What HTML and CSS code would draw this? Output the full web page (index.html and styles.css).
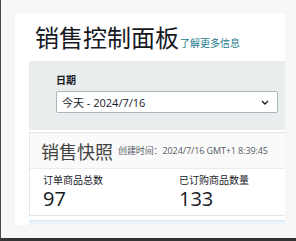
FILE: index.html
```html
<!DOCTYPE html>
<html lang="zh">
<head>
<meta charset="utf-8">
<link rel="stylesheet" href="styles.css">
</head>
<body>
<div class="frame">
  <div class="panel">
    <div class="page-head">
      <h1 class="title">销售控制面板</h1>
      <a class="info-link">了解更多信息</a>
    </div>
    <div class="filters">
      <div class="field-label">日期</div>
      <div class="select">
        <span class="select-text">今天 - 2024/7/16</span>
        <svg class="chev" width="8" height="5" viewBox="0 0 8 5"><path d="M1 1 L4 4 L7 1" fill="none" stroke="#16191f" stroke-width="1.3"/></svg>
      </div>
    </div>
    <div class="card">
      <div class="card-head">
        <span class="card-title">销售快照</span>
        <span class="card-meta">创建时间：2024/7/16 GMT+1 8:39:45</span>
      </div>
      <div class="card-body">
        <div class="metric">
          <div class="metric-label">订单商品总数</div>
          <div class="metric-value">97</div>
        </div>
        <div class="metric">
          <div class="metric-label">已订购商品数量</div>
          <div class="metric-value">133</div>
        </div>
      </div>
    </div>
    <div class="next-strip"></div>
  </div>
</div>
</body>
</html>
```
FILE: styles.css
```css
* { box-sizing: border-box; }
html, body { margin: 0; padding: 0; }
body {
  font-family: "Open Sans", "Noto Sans CJK SC", sans-serif;
  color: #16191f;
}
.frame {
  width: 296px;
  height: 241px;
  background: #f7f7f7;
  border-left: 1px solid #4a4a4a;
  border-bottom: 3px solid #333;
  padding: 14px 0 0 14px;
  overflow: hidden;
}
.panel {
  width: 270px;
  height: 211px;
  background: #fff;
  overflow: hidden;
  padding-left: 14px;
}
.page-head {
  display: flex;
  align-items: baseline;
  height: 47px;
  padding: 7px 0 0 6px;
}
.title {
  margin: 0;
  font-family: "Noto Sans CJK SC", sans-serif;
  font-weight: 400;
  font-size: 24px;
  line-height: 32px;
  color: #16191f;
}
.info-link {
  font-family: "Noto Sans CJK SC", sans-serif;
  font-size: 10px;
  color: #1a7a8c;
  margin-left: 1px;
}
.filters {
  width: 300px;
  height: 69px;
  background: #eaeded;
  padding: 12px 0 0 27px;
}
.field-label {
  font-family: "Noto Sans CJK SC", sans-serif;
  font-weight: 700;
  font-size: 10px;
  line-height: 14px;
  color: #16191f;
  margin-bottom: 4px;
}
.select {
  width: 222px;
  height: 22px;
  background: #fff;
  border: 1px solid #aab7b8;
  border-radius: 2px;
  display: flex;
  align-items: center;
  justify-content: space-between;
  padding: 0 8px 0 5px;
}
.select-text {
  font-size: 11px;
  color: #16191f;
}
.chev { display: block; }
.card {
  width: 300px;
  margin-top: 2px;
  border: 1px solid #e4e7e7;
}
.card-head {
  height: 36px;
  background: #fafafa;
  border-bottom: 1px solid #eaeded;
  display: flex;
  align-items: center;
  padding-left: 11px;
}
.card-title {
  font-family: "Noto Sans CJK SC", sans-serif;
  font-size: 18px;
  color: #444;
  margin-right: 5px;
}
.card-meta {
  font-size: 9px;
  letter-spacing: -0.1px;
  color: #545b64;
}
.card-body {
  display: grid;
  grid-template-columns: 136px 136px;
  padding: 4px 0 0 13px;
  height: 46px;
  background: #fff;
}
.metric-label {
  font-family: "Noto Sans CJK SC", sans-serif;
  font-size: 10px;
  line-height: 14px;
  color: #16191f;
}
.metric-value {
  font-size: 20px;
  line-height: 24px;
  color: #16191f;
}
.next-strip {
  margin-top: 4px;
  width: 300px;
  height: 10px;
  background: #eaf5fd;
  border-top: 1px solid #dbe8f0;
}
```
